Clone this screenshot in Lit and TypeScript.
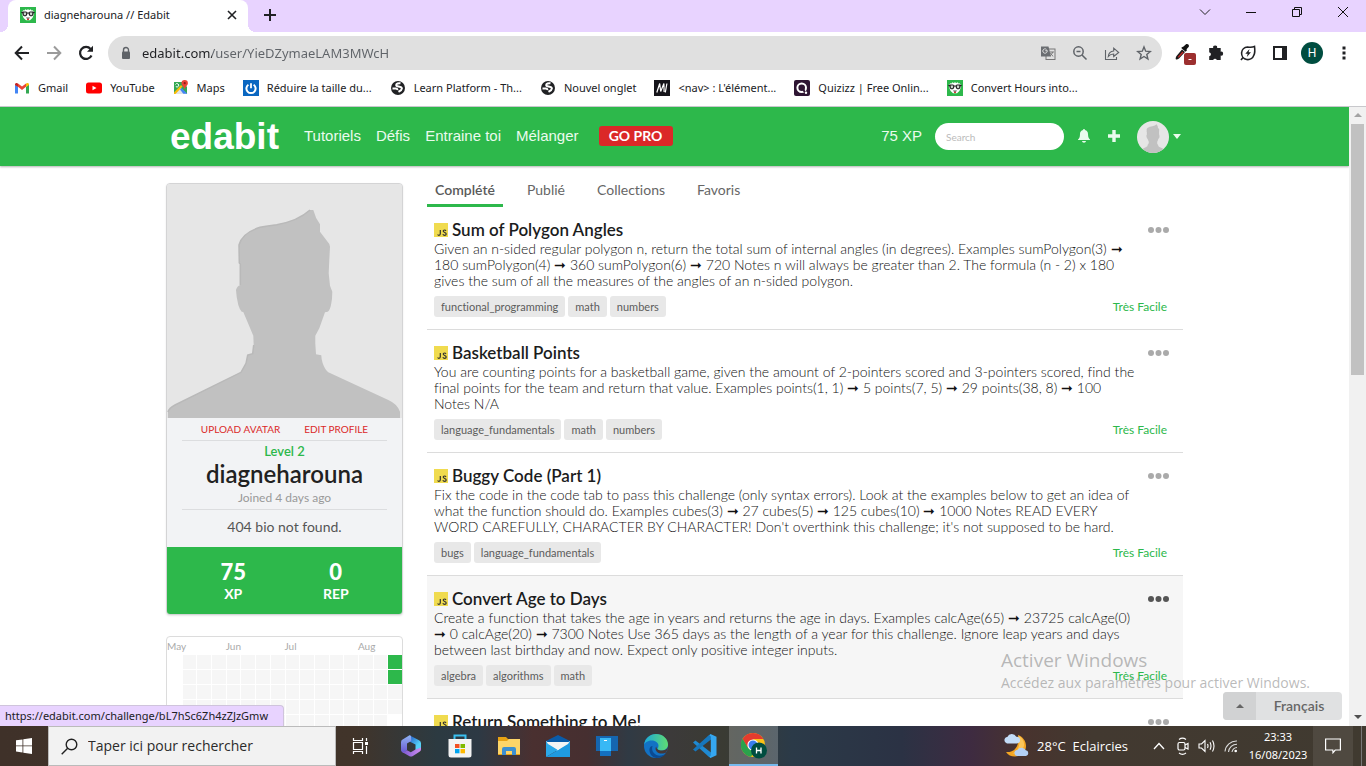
import { LitElement, html, svg, css } from "lit";
import { customElement } from "lit/decorators.js";
import { classMap } from "lit/directives/class-map.js";

interface Challenge {
  title: string;
  text: string;
  tags: string[];
  active?: boolean;
}

const challenges: Challenge[] = [
  {
    title: "Sum of Polygon Angles",
    text: "Given an n-sided regular polygon n, return the total sum of internal angles (in degrees). Examples sumPolygon(3) ➞ 180 sumPolygon(4) ➞ 360 sumPolygon(6) ➞ 720 Notes n will always be greater than 2. The formula (n - 2) x 180 gives the sum of all the measures of the angles of an n-sided polygon.",
    tags: ["functional_programming", "math", "numbers"],
  },
  {
    title: "Basketball Points",
    text: "You are counting points for a basketball game, given the amount of 2-pointers scored and 3-pointers scored, find the final points for the team and return that value. Examples points(1, 1) ➞ 5 points(7, 5) ➞ 29 points(38, 8) ➞ 100 Notes N/A",
    tags: ["language_fundamentals", "math", "numbers"],
  },
  {
    title: "Buggy Code (Part 1)",
    text: "Fix the code in the code tab to pass this challenge (only syntax errors). Look at the examples below to get an idea of what the function should do. Examples cubes(3) ➞ 27 cubes(5) ➞ 125 cubes(10) ➞ 1000 Notes READ EVERY WORD CAREFULLY, CHARACTER BY CHARACTER! Don't overthink this challenge; it's not supposed to be hard.",
    tags: ["bugs", "language_fundamentals"],
  },
  {
    title: "Convert Age to Days",
    text: "Create a function that takes the age in years and returns the age in days. Examples calcAge(65) ➞ 23725 calcAge(0) ➞ 0 calcAge(20) ➞ 7300 Notes Use 365 days as the length of a year for this challenge. Ignore leap years and days between last birthday and now. Expect only positive integer inputs.",
    tags: ["algebra", "algorithms", "math"],
    active: true,
  },
  {
    title: "Return Something to Me!",
    text: "",
    tags: [],
  },
];

const edabitIcon = svg`<svg width="16" height="16" viewBox="0 0 16 16">
  <rect width="16" height="16" fill="#2db84b"/>
  <path d="M2 5 3.300 3.200l1.200.3.700-1.200 1.400.8L8 2.200l1.400.9 1.400-.8.700 1.200 1.200-.3L14 5l-.3 3-1.300 3-2.400 2.200H6L3.600 11 2.300 8z" fill="#fff"/>
  <path d="M.8 5.600 3 4.400h3.200l1.100 1h1.400l1.100-1H13l2.200 1.200-1.500.6-.5 2-1.200 1H10.200L9 8.200l-.4-1.600H7.400L7 8.200 5.800 9.200H4l-1.200-1-.5-2z" fill="#222"/>
  <path d="M3.700 5.600h2.500l-.2 2-.7.600H4.500l-.7-.6zM9.800 5.600h2.500l-.1 2-.7.600h-.8l-.7-.6z" fill="#cfd8d0"/>
  <path d="M6 10.500h4l-1 1.200H7z" fill="#555"/><path d="M7 11.700h2v1.300H7z" fill="#d33"/></svg>`;

const globeIcon = svg`<svg width="16" height="16" viewBox="0 0 16 16">
  <circle cx="8" cy="8" r="7" fill="#202124"/>
  <path d="M10.500 3.300C8.500 3 6.200 3.700 6.200 5c0 1 1 1.300 2.400 1.500 2 .3 3.300.8 3.300 2 0 1.500-1.600 2.300-3.400 3.300M2.500 8.500h3.300c1.200 0 1.700.5 1.500 1.600" stroke="#fff" stroke-width="2" fill="none"/></svg>`;

const bookmarks = [
  { text: "Gmail", icon: svg`<svg width="16" height="16" viewBox="0 0 16 16"><path d="M1 13.500V4.500l3 2.200v6.800z" fill="#4285f4"/><path d="M12 13.500V6.700l3-2.200v9z" fill="#34a853"/><path d="M4 6.700V3.500L8 6.600l4-3.100v3.200L8 10z" fill="#ea4335"/><path d="M1 4.500C1 2.900 2.700 2.400 4 3.500v3.400L1 4.900z" fill="#c5221f"/><path d="M15 4.500c0-1.600-1.700-2.100-3-1v3.400l3-2z" fill="#fbbc04"/></svg>` },
  { text: "YouTube", icon: svg`<svg width="16" height="16" viewBox="0 0 16 16"><rect x="0" y="2.500" width="16" height="11" rx="2.500" fill="#f00"/><path d="M6.500 5.700v4.600L10.500 8z" fill="#fff"/></svg>` },
  { text: "Maps", icon: svg`<svg width="16" height="16" viewBox="0 0 16 16"><path d="M1 2h9l4 5v7H1z" fill="#34a853"/><path d="m1 14 6-6.500L14 14z" fill="#dfe3e8"/><path d="m1 12.500 7-7.500 1.500 1.600L2.500 14H1z" fill="#fbbc04"/><path d="m8.500 8 5.800 5.800h-4L7 9.500z" fill="#4285f4"/><path d="M2.500 4.500a1.700 1.700 0 1 1 .3 2" stroke="#fff" fill="none"/><path d="M11.700 0a3.200 3.200 0 0 1 3.200 3.200c0 2.200-2.500 3-3.200 6.300-.7-3.300-3.200-4.100-3.200-6.300A3.200 3.200 0 0 1 11.700 0z" fill="#ea4335"/><circle cx="11.700" cy="3.200" r="1.100" fill="#8b1d16"/></svg>` },
  { text: "Réduire la taille du...", icon: svg`<svg width="16" height="16" viewBox="0 0 16 16"><rect width="16" height="16" fill="#0a67c1"/><path d="M5.400 4.700a4.600 4.600 0 1 0 5.200 0" stroke="#fff" stroke-width="2" fill="none"/><path d="M8 3.200v5" stroke="#fff" stroke-width="1.800"/></svg>` },
  { text: "Learn Platform - Th...", icon: globeIcon },
  { text: "Nouvel onglet", icon: globeIcon },
  { text: "<nav> : L'élément...", icon: svg`<svg width="16" height="16" viewBox="0 0 16 16"><rect width="16" height="16" fill="#15141a"/><path d="m2.800 12.500 2.900-9 1 8 3.200-8 .2 8.500M12.900 3.500l-1.600 9" stroke="#fff" stroke-width="1.200" fill="none"/></svg>` },
  { text: "Quizizz | Free Onlin...", icon: svg`<svg width="16" height="16" viewBox="0 0 16 16"><rect width="16" height="16" rx="2" fill="#2e1533"/><circle cx="7.700" cy="7.700" r="4.300" stroke="#fff" stroke-width="2" fill="none"/><path d="m9 9 2 3.500" stroke="#2e1533" stroke-width="2"/><circle cx="12" cy="12.700" r="1.200" fill="#fff"/></svg>` },
  { text: "Convert Hours into...", icon: edabitIcon },
];

const silhouette = svg`
  <path d="M1 235v-7q1-4 7-7l66-32.700 5-9 1.700-8.300 5-1.300 1-8.700-.4-9.300L76.300 128l-1.600-.3q-2-2-3.400-6.700-2-8-2.300-15 1-4 4.300-5V80l-1-1L72 61q3-12 21-17.700 7-1.600 16.700-2.600Q131 37 143 26h3.300q2 8 6.700 14.300v7.400l9.300 12.300.7 2.700-.7 13.300-.6 13.300 1.300 12.400 2.300 6q0 8-1.300 13.300-1 5-3.300 6.700l-2.700.6-5.700 16-4 7.400v7.600l.7 11 5.300 1q0 4 1.400 8 2 6 5.600 9l60 27.700q9 4 11.700 11.700v7z" fill="#c1c1c1"/>
  <path d="M1 228q1-4 7-7l66-32.700 5-9 1.700-8.300 5-1.300 1-8.700M73.300 101V80l-1-1L72 61q3-12 21-17.700 7-1.600 16.700-2.600Q131 37 143 26" fill="none" stroke="#b9b9b9" stroke-width="1.500"/>`;

@customElement("app-root")
export class AppRoot extends LitElement {
  static styles = css`
    :host {
      display: flex;
      flex-direction: column;
      height: 100vh;
      overflow: hidden;
      background: #fff;
      color: #202124;
      font: 11px/16px "Noto Sans", "Open Sans", sans-serif;
    }
    * { box-sizing: border-box; }
    button { border: 0; padding: 0; background: none; font: inherit; color: inherit; display: flex; align-items: center; justify-content: center; }
    a { color: inherit; text-decoration: none; }
    p, h1, h2 { margin: 0; padding: 0; }
    svg { display: block; flex: none; }

    .strip { display: flex; height: 32px; background: #e8d3ff; padding-left: 8px; flex: none; }
    .tab { position: relative; width: 240px; display: flex; align-items: center; gap: 8px; padding: 0 8px 2px 12px; background: #fff; border-radius: 8px 8px 0 0; }
    .tab::before, .tab::after { content: ""; position: absolute; bottom: 0; width: 8px; height: 8px; }
    .tab::before { left: -8px; background: radial-gradient(circle at 0 0, #e8d3ff 8px, #fff 8px); }
    .tab::after { right: -8px; background: radial-gradient(circle at 100% 0, #e8d3ff 8px, #fff 8px); }
    .tab-title { flex: 1; }
    .new-tab { width: 28px; margin-left: 8px; padding-bottom: 2px; }
    .window { display: flex; margin-left: auto; padding-bottom: 8px; }
    .window button { width: 46px; }

    .toolbar { display: flex; align-items: center; height: 42px; flex: none; padding: 0 6px; }
    .toolbar > button { width: 32px; height: 32px; }
    .omnibox { flex: 1; display: flex; align-items: center; height: 34px; margin: 0 6px; padding: 0 2px 0 10px; border-radius: 17px; background: #e0e0e0; }
    .omnibox button { width: 32px; height: 32px; }
    .url { flex: 1; min-width: 0; margin-left: 8px; border: 0; padding: 0; outline: 0; height: 24px; font: 13px/24px "Noto Sans", sans-serif;
      background: linear-gradient(90deg, #202124 70px, #5f6368 70px); -webkit-background-clip: text; background-clip: text; color: transparent; }
    .me { display: flex; width: 22px; height: 22px; border-radius: 11px; background: #004d40; color: #fff; align-items: center; justify-content: center; font: 12px/22px Roboto, sans-serif; }

    .bookmarks { display: flex; align-items: center; gap: 18px; height: 33px; flex: none; padding: 0 14px 4px; border-bottom: 1px solid #c8c8cc; white-space: nowrap; overflow: hidden; }
    .bookmarks a { display: flex; align-items: center; gap: 8px; }

    .viewport { position: relative; flex: 1; min-height: 0; display: flex; }
    .page { flex: 1; min-width: 0; overflow: hidden; font-family: Lato, sans-serif; font-variant-ligatures: none; }
    .container { max-width: 1017px; margin: 0 auto; }
    .header { background: #2db84b; box-shadow: 0 1px 2px #0000004d; }
    .header .container { display: flex; align-items: center; height: 59px; padding-left: 4px; color: #eafbee; font: 15px/20px "Liberation Sans", Arial, sans-serif; }
    .logo { font-size: 37px; line-height: 56px; font-weight: 700; color: #fff; }
    .nav, .pro, .xp, .header .icon { margin-bottom: 2px; }
    .nav { display: flex; gap: 15px; margin-left: 25px; }
    .pro { margin-left: 20px; width: 74px; height: 20px; border-radius: 3px; background: #db2828; color: #fff; font: 700 14px/20px Lato, sans-serif; }
    .xp { margin-left: auto; }
    .search { width: 129px; height: 27px; margin-left: 13px; border: 0; border-radius: 14px; background: #fff; padding: 0 11px; font: 10px/16px Lato, sans-serif; outline: 0; }
    .search::placeholder { color: #bbb; }
    .header .icon { width: 30px; height: 30px; }
    .header .bell { margin-left: 5px; }
    .user { gap: 4px; margin: 0 2px 0 8px; }
    .avatar { border-radius: 16px; background: #e6e6e6; overflow: hidden; }

    .body { display: flex; align-items: flex-start; gap: 24px; }
    .side { width: 237px; flex: none; padding-top: 17px; display: flex; flex-direction: column; gap: 21px; }
    .card { border: 1px solid #d4d4d5; border-radius: 4px; overflow: hidden; background: #f2f3f5; text-align: center; box-shadow: 0 1px 2px #0000001a; }
    .photo { width: 100%; height: auto; background: #e6e6e6; }
    .info { padding: 0 15px; }
    .links { display: flex; justify-content: center; gap: 24px; padding: 3px 0; border-bottom: 1px solid #dcdddf; font-size: 10px; line-height: 16px; color: #db2828; }
    .level { font-size: 13px; line-height: 20px; font-weight: 600; color: #2db84b; }
    .name { font-size: 24px; line-height: 26px; font-weight: 600; color: #212121; }
    .joined { font-size: 12px; line-height: 22px; color: #999; border-bottom: 1px solid #dcdddf; }
    .bio { font-size: 14px; line-height: 34px; padding-bottom: 3px; color: #555; }
    .score { display: grid; grid-template-columns: 1fr 1fr; padding: 12px 15px 11px; background: #2db84b; color: #fff; font-weight: 700; }
    .score strong { display: block; font-size: 22px; line-height: 26px; }
    .score span { display: block; font-size: 14px; line-height: 18px; }
    .calendar { border: 1px solid #dcdcdc; border-radius: 4px; overflow: hidden; font-size: 10px; line-height: 18px; color: #aaa; }
    .months, .days { display: grid; grid-template-columns: repeat(16, 1fr); }
    .months span { white-space: nowrap; width: 0; }
    .m1 { grid-column: 1; } .m2 { grid-column: 5; } .m3 { grid-column: 9; } .m4 { grid-column: 14; }
    .days { grid-auto-rows: 15px; }
    .day { margin: 0 0 1px 1px; background: #f6f6f6; }
    .day.none { background: none; }
    .day.done { background: #2db84b; }

    .main { flex: 1; min-width: 0; padding-top: 10px; }
    .tabs { display: flex; gap: 16px; font-size: 14px; line-height: 28px; color: #666; }
    .tabs a { padding: 0 8px; border-bottom: 3px solid transparent; }
    .tabs .current { font-weight: 600; border-color: #2db84b; color: #5a5a5a; }
    .item { padding: 13px 14px 12px 7px; border-bottom: 1px solid #dcdcdc; }
    .item.active { background: #f6f6f6; }
    .head { display: flex; align-items: center; gap: 4px; height: 20px; margin-bottom: 1px; }
    .title { font-size: 17px; line-height: 20px; font-weight: 600; color: #1b1c1d; }
    .more { margin-left: auto; color: #aaa; }
    .active .more { color: #555; }
    .text { font-size: 14px; line-height: 16px; font-weight: 300; color: #111; padding-right: 32px; }
    .foot { display: flex; align-items: center; gap: 3px; margin-top: 7px; padding-right: 2px; }
    .tag { padding: 0 7px; border-radius: 3px; background: #e8e8e8; color: #5c5c5c; font-size: 11px; line-height: 21px; }
    .level-tag { margin-left: auto; font-size: 12px; color: #2db84b; }

    .scroll { width: 17px; flex: none; display: flex; flex-direction: column; align-items: center; background: #f1f1f1; }
    .scroll button { height: 17px; }
    .thumb { width: 13px; height: 251px; background: #c1c1c1; }
    .down { margin-top: auto; }

    .lang { position: absolute; right: 24px; bottom: 6px; display: flex; height: 28px; border-radius: 4px; overflow: hidden; background: #e0e1e2; color: #666; font: 600 14px/28px Lato, sans-serif; }
    .lang .arrow { width: 33px; background: #d1d2d3; }
    .lang .label { width: 86px; }
    .status { position: absolute; left: 0; bottom: 0; height: 21px; padding: 0 15px 0 5px; border: 1px solid #cfc4dc; border-width: 1px 1px 0 0; border-radius: 0 4px 0 0; background: #e8d3ff; line-height: 20px; }
    .watermark { position: absolute; right: 56px; bottom: 33px; white-space: nowrap; pointer-events: none; color: #8c8c8c99; font: 14px/20px "Open Sans", sans-serif; }
    .watermark strong { display: block; font-weight: 400; font-size: 19px; line-height: 26px; }

    .taskbar { display: flex; height: 40px; flex: none; color: #fff; background: linear-gradient(90deg, #3f3129 0, #41342a 26%, #2c3a41 32%, #2d3944 35%, #4a3030 39%, #462f30 43%, #303a44 46%, #3c3a3a 49%, #3a3b33 53%, #2b3a48 58%, #2b3244 66%, #3e2b41 71%, #48332e 75%, #423930 80%, #403a30 100%); }
    .taskbar button { width: 49px; }
    .taskbar .start, .taskbar .view { width: 48px; }
    .find { display: flex; align-items: center; gap: 10px; width: 288px; padding-left: 12px; border: 1px solid #bbb; background: #f2f2f2; }
    .find input { flex: 1; min-width: 0; border: 0; padding: 0; background: none; outline: 0; font: 14px/20px "Open Sans", sans-serif; }
    .find input::placeholder { color: #2b2b2b; opacity: 1; }
    .apps { display: flex; margin-left: 2px; }
    .apps .open { background: #ffffff38; border-bottom: 2px solid #76b9ed; }
    .tray { display: flex; align-items: center; margin-left: auto; padding-right: 4px; }
    .tray button { width: 24px; height: 40px; }
    .tray .weather { width: auto; gap: 8px; font: 13px/20px "Open Sans", sans-serif; margin-right: 19px; white-space: pre; }
    .clock { width: 70px; text-align: center; line-height: 18px; }
    .tray .notes { width: 40px; background: #ffffff14; margin-right: 8px; }
    .peek { width: 1px; height: 40px; background: #777; }
  `;

  private dayClass(i: number) {
    const col = i % 16;
    const row = Math.floor(i / 16);
    return classMap({ day: true, none: col === 0 || (col === 15 && row > 3), done: col === 15 && row < 2 });
  }

  render() {
    return html`
      <div class="strip">
        <div class="tab">${edabitIcon}<span class="tab-title">diagneharouna // Edabit</span>
          <button aria-label="Fermer l'onglet"><svg width="16" height="16" viewBox="0 0 16 16"><path d="m4 4 8 8M12 4l-8 8" stroke="#202124" stroke-width="1.600"/></svg></button></div>
        <button class="new-tab" aria-label="Nouvel onglet"><svg width="14" height="14" viewBox="0 0 14 14"><path d="M7 1v12M1 7h12" stroke="#202124" stroke-width="2"/></svg></button>
        <div class="window">
          <button aria-label="Rechercher"><svg width="12" height="12" viewBox="0 0 12 12"><path d="m1 3.500 5 5 5-5" stroke="#222" fill="none"/></svg></button>
          <button aria-label="Réduire"><svg width="12" height="12" viewBox="0 0 12 12"><path d="M1 6.500h10" stroke="#111"/></svg></button>
          <button aria-label="Restaurer"><svg width="12" height="12" viewBox="0 0 12 12"><path d="M1.500 3.500h7v7h-7zM3.500 3.500v-2h7v7h-2" stroke="#111" fill="none"/></svg></button>
          <button aria-label="Fermer"><svg width="12" height="12" viewBox="0 0 12 12"><path d="m1 1 10 10M11 1 1 11" stroke="#111"/></svg></button>
        </div>
      </div>

      <div class="toolbar">
        <button aria-label="Retour"><svg width="20" height="20" viewBox="0 0 20 20"><path d="M17 10H4m6-6.500L3.700 10l6.300 6.500" stroke="#202124" stroke-width="2" fill="none"/></svg></button>
        <button aria-label="Avancer"><svg width="20" height="20" viewBox="0 0 20 20"><path d="M3 10h13m-6-6.500 6.300 6.500-6.300 6.500" stroke="#9b9b9b" stroke-width="2" fill="none"/></svg></button>
        <button aria-label="Actualiser"><svg width="20" height="20" viewBox="0 0 20 20"><path d="M15.500 12.500A6 6 0 1 1 14.600 6" stroke="#202124" stroke-width="2.200" fill="none"/><path d="M17 2.800v6h-6z" fill="#202124"/></svg></button>
        <div class="omnibox">
          <svg width="16" height="16" viewBox="0 0 16 16"><rect x="4" y="6.500" width="8" height="7.500" rx="1" fill="#5f6368"/><path d="M5.500 7V5a2.500 2.500 0 0 1 5 0v2" stroke="#5f6368" stroke-width="1.400" fill="none"/></svg>
          <input class="url" aria-label="Adresse" .value=${"edabit.com/user/YieDZymaeLAM3MWcH"} />
          <button aria-label="Traduire"><svg width="16" height="16" viewBox="0 0 16 16"><rect x="6" y="4" width="9" height="10.500" fill="none" stroke="#777"/><path d="M1 1.500h7.500l2.500 10H1z" fill="#6b6e72"/><path d="M7.500 5.700H5.300M7.200 5.800a2.200 2.200 0 1 1-.7-1.400" stroke="#e0e0e0" fill="none"/><path d="M9.500 7h4.500M12.500 7c-.3 2-1.300 3-2.500 4m.5-3c.5 1.500 1.500 2.500 2.700 3.300" stroke="#777" fill="none"/></svg></button>
          <button aria-label="Zoom"><svg width="16" height="16" viewBox="0 0 16 16"><circle cx="6.500" cy="6.500" r="4.700" stroke="#5f6368" stroke-width="1.500" fill="none"/><path d="m10 10 4.500 4.500M4.500 6.500h4" stroke="#5f6368" stroke-width="1.500"/></svg></button>
          <button aria-label="Partager"><svg width="16" height="16" viewBox="0 0 16 16"><path d="M1.500 5v9.500h11V12M4.300 11.500c.3-3.500 2.200-5.300 5.400-5.500V3.200L14.700 7.500l-5 4V9c-2.300 0-4 .7-5.400 2.500z" stroke="#5f6368" stroke-width="1.100" fill="none"/></svg></button>
          <button aria-label="Favori"><svg width="16" height="16" viewBox="0 0 16 16"><path d="m8 1.900 1.700 4.300 4.600.3-3.500 3 1.100 4.500L8 11.500 4.100 14l1.100-4.500-3.500-3 4.600-.3z" stroke="#5f6368" stroke-width="1.400" fill="none"/></svg></button>
        </div>
        <button aria-label="Pipette"><svg width="24" height="24" viewBox="0 0 24 24"><path d="M4 18.500c-.8-1 0-2.500.5-3.500L10 8.500l3 2.500-6 6.500c-1 .7-2 1.200-3 1z" fill="#1b1b1b"/><path d="m5.700 16 4.800-5.500 1 .9-4.800 5.400z" fill="#c62828"/><path d="m9.500 6.500 2-1 2.500-2.300c1.800-.7 3.500.8 2.800 2.600l-2.300 2.500.5 1-1.500 1.500-4-3.500z" fill="#111"/><rect x="12" y="12" width="12" height="12" rx="2" fill="#9c2f2f"/><path d="M16.500 18.500h3" stroke="#fff"/></svg></button>
        <button aria-label="Extensions"><svg width="20" height="20" viewBox="0 0 20 20"><path d="M4 5h3.200a2 2 0 1 1 3.900 0h3.600v3.700a2 2 0 1 1 0 3.900V17h-3.900a1.900 1.900 0 0 0-3.600 0H3.200v-3.800a1.900 1.900 0 0 0 .6-3.600H3.200V5z" fill="#202124"/></svg></button>
        <button aria-label="Économie"><svg width="18" height="18" viewBox="0 0 18 18"><path d="M15.500 2.500c.5 3.500.7 6-.6 8.600A6.300 6.300 0 1 1 8.500 3c2.500.4 4.700.5 7-.5z" stroke="#202124" stroke-width="1.600" fill="none"/><path d="m2 16 2-2.500" stroke="#202124" stroke-width="1.600"/><path d="m10.500 5-4.200 4.800h2.400L7.800 13 12 8.300H9.600z" fill="#202124"/></svg></button>
        <button aria-label="Panneau latéral"><svg width="16" height="16" viewBox="0 0 16 16"><path d="M1 1h14v14H1zm2 2v10h7V3z" fill="#202124" fill-rule="evenodd"/></svg></button>
        <button aria-label="Profil"><span class="me">H</span></button>
        <button aria-label="Menu"><svg width="4" height="16" viewBox="0 0 4 16"><path d="M.5 1.500h3v3h-3zM.5 6.500h3v3h-3zM.5 11.500h3v3h-3z" fill="#202124"/></svg></button>
      </div>

      <div class="bookmarks">${bookmarks.map((b) => html`<a href="#">${b.icon}<span>${b.text}</span></a>`)}</div>

      <div class="viewport">
        <div class="page">
          <header class="header"><div class="container">
            <a class="logo" href="#">edabit</a>
            <nav class="nav"><a href="#">Tutoriels</a><a href="#">Défis</a><a href="#">Entraine toi</a><a href="#">Mélanger</a></nav>
            <button class="pro">GO PRO</button>
            <span class="xp">75 XP</span>
            <input class="search" placeholder="Search" aria-label="Search" />
            <button class="icon bell" aria-label="Notifications"><svg width="12" height="14" viewBox="0 0 12 14"><path d="M6 0c.7 0 .9.500.9 1C9 1.500 10 3 10 5c0 3.500 1 4.500 2 5.500V11H0v-.5C1 9.500 2 8.500 2 5c0-2 1-3.500 3.100-4 0-.5.200-1 .9-1zM4 12h4c-.2 1-1 1.700-2 1.700S4.200 13 4 12z" fill="#eafbee"/></svg></button>
            <button class="icon" aria-label="Ajouter"><svg width="12" height="12" viewBox="0 0 12 12"><path d="M4.300 0h3.400v4.300H12v3.400H7.700V12H4.300V7.700H0V4.300h4.300z" fill="#eafbee"/></svg></button>
            <button class="user" aria-label="Compte"><svg class="avatar" width="32" height="32" viewBox="0 0 235 234">${silhouette}</svg><svg width="8" height="5" viewBox="0 0 8 5"><path d="M0 0h8L4 5z" fill="#eafbee"/></svg></button>
          </div></header>

          <div class="container body">
            <aside class="side">
              <section class="card">
                <svg class="photo" viewBox="0 0 235 234">${silhouette}</svg>
                <div class="info">
                  <div class="links"><a href="#">UPLOAD AVATAR</a><a href="#">EDIT PROFILE</a></div>
                  <p class="level">Level 2</p>
                  <h1 class="name">diagneharouna</h1>
                  <p class="joined">Joined 4 days ago</p>
                  <p class="bio">404 bio not found.</p>
                </div>
                <div class="score"><div><strong>75</strong><span>XP</span></div><div><strong>0</strong><span>REP</span></div></div>
              </section>
              <section class="calendar">
                <div class="months"><span class="m1">May</span><span class="m2">Jun</span><span class="m3">Jul</span><span class="m4">Aug</span></div>
                <div class="days">${Array.from({ length: 112 }, (_, i) => html`<i class=${this.dayClass(i)}></i>`)}</div>
              </section>
            </aside>
            <main class="main">
              <nav class="tabs"><a class="current" href="#">Complété</a><a href="#">Publié</a><a href="#">Collections</a><a href="#">Favoris</a></nav>
              ${challenges.map((c) => html`
                <article class=${classMap({ item: true, active: !!c.active })}>
                  <div class="head">
                    <svg class="js" width="14" height="14" viewBox="0 0 14 14"><rect width="14" height="14" fill="#f0db4f"/><path d="M6.300 7v3.800c0 1-.6 1.500-1.400 1.500-.6 0-1-.3-1.300-.8M12 7.800c-.4-.6-.9-.8-1.500-.8-.8 0-1.300.4-1.300 1.100 0 1.700 3 1 3 2.800 0 .9-.7 1.400-1.600 1.400-.8 0-1.400-.3-1.800-1" stroke="#323330" stroke-width="1.200" fill="none"/></svg>
                    <h2 class="title"><a href="#">${c.title}</a></h2>
                    <button class="more" aria-label="Options"><svg width="21" height="6" viewBox="0 0 21 6"><g fill="currentColor"><circle cx="3" cy="3" r="3"/><circle cx="10.500" cy="3" r="3"/><circle cx="18" cy="3" r="3"/></g></svg></button>
                  </div>
                  ${c.text ? html`<p class="text">${c.text}</p>
                  <div class="foot">${c.tags.map((t) => html`<a class="tag" href="#">${t}</a>`)}<span class="level-tag">Très Facile</span></div>` : ""}
                </article>`)}
            </main>
          </div>
        </div>
        <div class="scroll">
          <button aria-label="Défiler vers le haut"><svg width="8" height="5" viewBox="0 0 8 5"><path d="M4 0 8 4H0z" fill="#a3a3a3"/></svg></button>
          <div class="thumb"></div>
          <button class="down" aria-label="Défiler vers le bas"><svg width="8" height="5" viewBox="0 0 8 5"><path d="M0 0h8L4 4z" fill="#505050"/></svg></button>
        </div>
        <div class="lang"><button class="arrow" aria-label="Choisir la langue"><svg width="8" height="5" viewBox="0 0 8 5"><path d="M4 0 8 4H0z" fill="#666"/></svg></button><button class="label">Français</button></div>
        <div class="status">https://edabit.com/challenge/bL7hSc6Zh4zZJzGmw</div>
        <div class="watermark"><strong>Activer Windows</strong>Accédez aux paramètres pour activer Windows.</div>
      </div>

      <footer class="taskbar">
        <button class="start" aria-label="Démarrer"><svg width="16" height="16" viewBox="0 0 16 16"><path d="M0 2.300 6.500 1.400v6.100H0zM7.300 1.300 16 0v7.500H7.300zM0 8.300h6.500v6.200L0 13.600zM7.300 8.300H16V16l-8.700-1.300z" fill="#fff"/></svg></button>
        <label class="find"><svg width="17" height="17" viewBox="0 0 17 17"><circle cx="10.500" cy="6.500" r="5.300" stroke="#222" stroke-width="1.400" fill="none"/><path d="M6.700 10.300.7 16.300" stroke="#222" stroke-width="1.400"/></svg>
          <input placeholder="Taper ici pour rechercher" aria-label="Taper ici pour rechercher" /></label>
        <button class="view" aria-label="Vue des tâches"><svg width="17" height="16" viewBox="0 0 17 16"><path d="M1.500 0v2.500h9V0M1.500 16v-2.500h9V16M1.500 4.500h9v7h-9zM14.500 0v3M14.500 8v8" stroke="#fff" stroke-width="1.200" fill="none"/><path d="M13 4h3v3h-3z" fill="#fff"/></svg></button>
        <div class="apps">
          <button aria-label="Microsoft 365"><svg width="22" height="22" viewBox="0 0 22 22"><defs><linearGradient id="o1" x1="0" y1="0" x2="1" y2="1"><stop offset=".2" stop-color="#2a6fd0"/><stop offset=".7" stop-color="#56d2f7"/></linearGradient><linearGradient id="o2" x1="0" x2="1"><stop stop-color="#7a58cf"/><stop offset="1" stop-color="#cf8df0"/></linearGradient><linearGradient id="o3" x2="0" y2="1"><stop stop-color="#8fb4f5"/><stop offset="1" stop-color="#6a55d0"/></linearGradient></defs><path d="M9.500.3 19 5.300q2 1 2 3v5.500l-5.500 2V9.600L8 5.700z" fill="url(#o1)"/><path d="M1 7.200q0-1.700 1.600-2.600L9.500.3q1.700 0 1.700 2v3.800L7 8.500v6.700L3.500 18 1.500 16.500q-.5-.8-.5-1.500z" fill="url(#o3)"/><path d="M2 17q2 .3 5-1.800l3.800 2 4.700-2.600 5.500-2v1.600q0 1.500-1.500 2.500l-6.600 4.300q-1.900 1-3.800 0z" fill="url(#o2)"/></svg></button>
          <button aria-label="Microsoft Store"><svg width="24" height="24" viewBox="0 0 24 24"><path d="M6.500 6V1.500h11V6" stroke="#3ac0f0" stroke-width="2" fill="none"/><path d="M.5 5h23v16q0 2.500-2.500 2.500H3Q.5 23.500.5 21z" fill="#f3f3f3"/><path d="M7 10h4.500v4H7z" fill="#f25022"/><path d="M12.500 10H17v4h-4.500z" fill="#7fba00"/><path d="M7 15h4.500v4.300H7z" fill="#00a4ef"/><path d="M12.500 15H17v4.300h-4.500z" fill="#ffb900"/></svg></button>
          <button aria-label="Explorateur"><svg width="22" height="20" viewBox="0 0 22 20"><path d="M0 1h8l2 2h12v16H0z" fill="#e8a213"/><path d="M0 5h9l2-2h11v15H0z" fill="#fdd568"/><path d="M4 19v-6q0-2 2-2h10q2 0 2 2v6h-4v-4H8v4z" fill="#3c8fd0"/></svg></button>
          <button aria-label="Courrier"><svg width="24" height="22" viewBox="0 0 24 22"><path d="M0 6 12 0l12 6v4H0z" fill="#0a5ba8"/><path d="M1 7h22v9H1z" fill="#f4f4f4"/><path d="m0 6 12 9L0 22z" fill="#2ba8e8"/><path d="m24 6-12 9L0 22h24z" fill="#1f9ae0"/><path d="m0 6 1.500 1h21L24 6l-2 3-10 6L2 9z" fill="#f4f4f4"/></svg></button>
          <button aria-label="Mobile connecté"><svg width="22" height="22" viewBox="0 0 22 22"><path d="M0 1h22v15H0z" fill="#1566b0"/><path d="M4 3h11v18H4z" fill="#1470c0"/><path d="M4 3h11v13H4z" fill="#38b8f5"/><path d="M8 5.500h3" stroke="#fff"/></svg></button>
          <button aria-label="Edge"><svg width="24" height="24" viewBox="0 0 24 24"><defs><linearGradient id="e1"><stop stop-color="#1ca9d9"/><stop offset="1" stop-color="#5fdb72"/></linearGradient></defs><circle cx="12" cy="12" r="12" fill="#1272c4"/><path d="M0 11C1 4 6 0 12 0c7 0 12 5 12 10.500 0 4-3.500 6-7 6-2 0-3.500-.8-3.500-1.800 0-.7 1-1.200 1-3 0-2.500-2.500-5.200-7-5.200-4 0-7 2.500-7.500 4.500z" fill="url(#e1)"/><path d="M8.500 12c-2 6 3.500 10.500 9 9.500 2-.4 4-1.700 5-2.500C20 22.500 16 24 12.500 24 7 23.500 5 18 5.500 15c.3-2 1.500-3 3-3z" fill="#0b4a92"/><path d="M24 12.500c-.3 3-1 4.500-2 6-2 1.500-8 2-10-2-.7-1.500-.5-3 .3-4 0 3 3 4.200 5.700 4 2.500 0 5-1 6-4z" fill="#453736"/></svg></button>
          <button aria-label="Visual Studio Code"><svg width="24" height="24" viewBox="0 0 24 24"><path d="m0 8.500 2.500-2 15.500 12V24L16 23z" fill="#1f8ad2"/><path d="m0 15.500 2.500 2L18 5.500V0L16 1z" fill="#1677bd"/><path d="m17.500 0 6 2.700v18.600l-6 2.700-1-1.500 1.300-1V2.500l-1.300-1z" fill="#35a7f0"/></svg></button>
          <button class="open" aria-label="Chrome"><svg width="28" height="28" viewBox="0 0 28 28"><circle cx="13" cy="14" r="12" fill="#fbc116"/><path d="M2.600 8A12 12 0 0 1 23.400 8H13z" fill="#e33b2e"/><path d="M2.600 8A12 12 0 0 0 11 25.800L17 16l-9.200.8z" fill="#2ba24c"/><path d="M2.600 8h11L8 17z" fill="#e33b2e"/><path d="M2.600 8 8 17l5 2-3 6.600A12 12 0 0 1 2.600 8z" fill="#2ba24c"/><circle cx="13" cy="14" r="5.600" fill="#fff"/><circle cx="13" cy="14" r="4.500" fill="#3b7ded"/><circle cx="19" cy="19.500" r="8" fill="#004d40"/><path d="M16.500 16.500v6M21 16.500v6M16.500 19.500H21" stroke="#fff" stroke-width="1.300"/></svg></button>
        </div>
        <div class="tray">
          <button class="weather"><svg width="26" height="24" viewBox="0 0 26 24"><path d="M15 1c5 2 8 6 8 11 0 6-5 10.500-11 10.500-4 0-7-1.500-9-4.500 7 1 14-4 12-17z" fill="#f5a623"/><path d="M15.500 1.500c4 2.500 6 6 5.500 10-1 5-6 8.500-12 8 6-2 9-8 6.500-18z" fill="#fbc65a"/><path d="M4 9.500a3.300 3.300 0 0 1 .3-6.500 5 5 0 0 1 9-.3 3.400 3.400 0 0 1 .7 6.800z" fill="#c3dcf8"/><path d="M14.500 22a3 3 0 0 1 0-6 4.700 4.700 0 0 1 8.300.3A2.900 2.900 0 0 1 23 22z" fill="#b3d0f5"/></svg>28°C  Eclaircies</button>
          <button aria-label="Icônes cachées"><svg width="12" height="8" viewBox="0 0 12 8"><path d="M1 7l5-5.500L11 7" stroke="#fff" stroke-width="1.300" fill="none"/></svg></button>
          <button aria-label="Réunion"><svg width="14" height="18" viewBox="0 0 14 18"><rect x="2" y="5.500" width="7" height="7.500" rx="1.500" stroke="#fff" stroke-width="1.200" fill="none"/><path d="M9 8l3-1.500v5.500L9 10.500M3 2.500c2-1.500 5-1.500 7 0M3 16c2 1.500 5 1.500 7 0" stroke="#fff" stroke-width="1.200" fill="none"/></svg></button>
          <button aria-label="Volume"><svg width="18" height="14" viewBox="0 0 18 14"><path d="M1 5h2.500L7 1.500v11L3.500 9H1zM9.500 5q1 2 0 4M12 3.200q2 3.800 0 7.600M14.500 1.500q3 5.500 0 11" stroke="#fff" stroke-width="1.100" fill="none"/></svg></button>
          <button aria-label="Réseau"><svg width="14" height="14" viewBox="0 0 14 14"><path d="M1 12.500A11.500 11.500 0 0 1 13 2M4.500 13A8.500 8.500 0 0 1 13 5.200M8 13a5.500 5.500 0 0 1 5-4.500" stroke="#ddd" stroke-width="1.100" fill="none"/><circle cx="11.700" cy="12" r="1.300" fill="#fff"/></svg></button>
          <div class="clock">23:33<br />16/08/2023</div>
          <button class="notes" aria-label="Notifications"><svg width="16" height="16" viewBox="0 0 16 16"><path d="M.6 1h14.800v11h-5.200L8 14.700 7.800 12H.6z" stroke="#fff" stroke-width="1.200" fill="none"/></svg></button>
          <div class="peek"></div>
        </div>
      </footer>
    `;
  }
}
